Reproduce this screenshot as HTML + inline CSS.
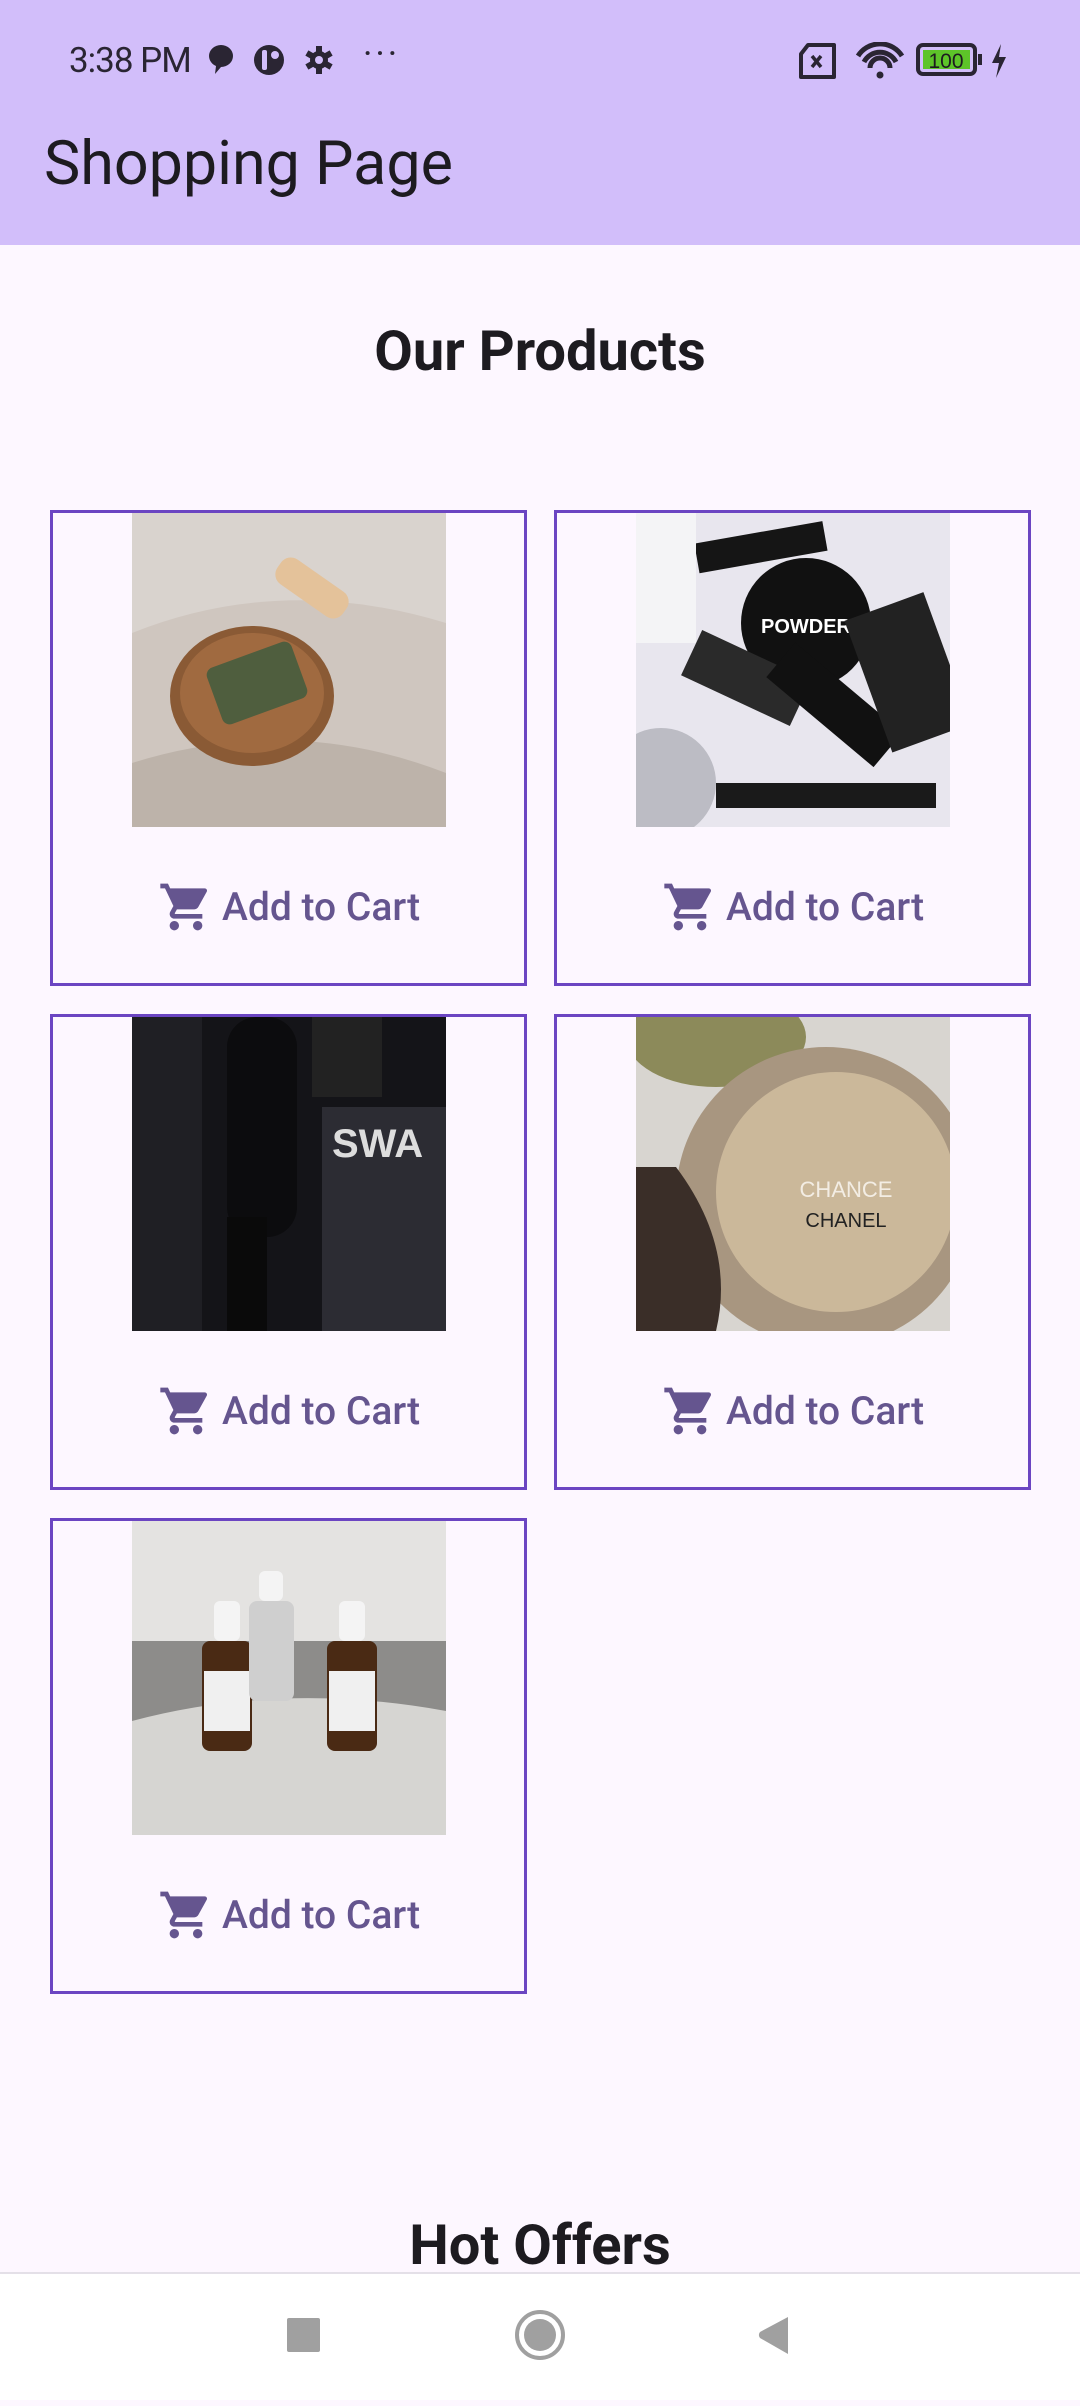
<!DOCTYPE html>
<html><head><meta charset="utf-8"><style>
*{margin:0;padding:0;box-sizing:border-box}
body{width:1080px;height:2400px;background:#FDF7FF;font-family:"Roboto","Liberation Sans",sans-serif;position:relative;overflow:hidden}
.top{position:absolute;left:0;top:0;width:1080px;height:245px;background:#D2BEFA}
.st{position:absolute;top:40px;font-size:35px;color:#2a2533;letter-spacing:-1px}
.title{position:absolute;left:44px;top:127px;font-size:61px;color:#1d1b20}
.h{position:absolute;left:0;width:1080px;text-align:center;font-weight:bold;color:#1d1b20;font-size:56px}
.card{position:absolute;width:477px;height:476px;border:3px solid #6B45C2;}
.img{position:absolute;left:79px;top:0;width:314px;height:314px;overflow:hidden}
.btn{position:absolute;left:105px;top:364px;height:60px;display:flex;align-items:center;color:#65558F;font-size:39px;font-weight:500;white-space:nowrap}
.btn svg{margin-right:8px}
.nav{position:absolute;left:0;top:2272px;width:1080px;height:128px;background:#fff;border-top:2px solid #e4e0e8}
</style></head><body>
<div class="top"></div>
<div class="st" style="left:69px">3:38 PM</div>
<svg style="position:absolute;left:205px;top:42px" width="130" height="36" viewBox="0 0 130 36">
<path d="M4 14a12 11 0 1 1 12 11l-6 7 1-8A11 11 0 0 1 4 14z" fill="#2a2533"/>
<circle cx="64" cy="18" r="15" fill="#2a2533"/><rect x="57" y="8" width="5" height="20" rx="2" fill="#D2BEFA"/><circle cx="70" cy="13" r="4" fill="#D2BEFA"/>
<g transform="translate(114 18)" fill="#2a2533"><circle r="9"/><rect x="-3" y="-14" width="6" height="28"/><rect x="-3" y="-14" width="6" height="28" transform="rotate(60)"/><rect x="-3" y="-14" width="6" height="28" transform="rotate(120)"/><circle r="4" fill="#D2BEFA"/></g>
</svg>
<div class="st" style="left:363px;top:33px;font-size:36px;letter-spacing:3px">···</div>
<svg style="position:absolute;left:798px;top:42px" width="220" height="40" viewBox="0 0 220 40">
<path d="M10 3h26v32H3V12z" fill="none" stroke="#2a2533" stroke-width="4" stroke-linejoin="round"/><path d="M14 14l9 11M23 14l-9 11" stroke="#2a2533" stroke-width="3.5"/>
<path d="M60 14a26 26 0 0 1 44 0M66 20a18 18 0 0 1 32 0M72 26a10 10 0 0 1 20 0" fill="none" stroke="#2a2533" stroke-width="5"/><circle cx="82" cy="33" r="3.5" fill="#2a2533"/>
<rect x="120" y="3" width="57" height="29" rx="5" fill="none" stroke="#2a2533" stroke-width="4"/><rect x="125" y="8" width="47" height="19" fill="#5DC429"/><rect x="180" y="12" width="4" height="11" fill="#2a2533"/>
<text x="148" y="26" font-size="21" text-anchor="middle" font-family="Liberation Sans" fill="#1d1b20">100</text>
<path d="M203 2l-9 19h7l-3 15 10-21h-7z" fill="#2a2533"/>
</svg>
<div class="title">Shopping Page</div>
<div class="h" style="top:318px">Our Products</div>

<!-- card 1 -->
<div class="card" style="left:50px;top:510px"><div class="img"><svg width="314" height="314"><rect width="314" height="314" fill="#d9d3ce"/><path d="M0 120 Q150 60 314 110 V314 H0z" fill="#cfc6bf"/><path d="M0 250 Q160 200 314 260V314H0z" fill="#bdb3aa"/><ellipse cx="120" cy="183" rx="82" ry="70" fill="#8a5a35"/><ellipse cx="120" cy="180" rx="72" ry="60" fill="#a06a40"/><rect x="80" y="140" width="90" height="60" rx="8" transform="rotate(-20 125 170)" fill="#4f5e3e"/><rect x="140" y="60" width="80" height="30" rx="12" transform="rotate(35 180 75)" fill="#e4c29a"/></svg></div>
<div class="btn"><svg width="56" height="56" viewBox="0 0 24 24"><path fill="#65558F" d="M7 18c-1.1 0-2 .9-2 2s.9 2 2 2 2-.9 2-2-.9-2-2-2zM1 2v2h2l3.6 7.59-1.35 2.45c-.16.28-.25.61-.25.96 0 1.1.9 2 2 2h12v-2H7.42c-.14 0-.25-.11-.25-.25l.03-.12.9-1.630h7.45c.75 0 1.41-.41 1.75-1.03l3.58-6.49A1 1 0 0 0 20 4H5.21l-.94-2H1zm16 16c-1.1 0-2 .9-2 2s.9 2 2 2 2-.9 2-2-.9-2-2-2z"/></svg>Add to Cart</div></div>

<!-- card 2 -->
<div class="card" style="left:554px;top:510px"><div class="img"><svg width="314" height="314"><rect width="314" height="314" fill="#e8e6ee"/><rect x="60" y="20" width="130" height="30" transform="rotate(-10 120 35)" fill="#151515"/><circle cx="170" cy="110" r="65" fill="#111"/><text x="170" y="120" fill="#fff" font-size="20" font-weight="bold" text-anchor="middle" font-family="Liberation Sans">POWDER</text><rect x="50" y="140" width="120" height="50" transform="rotate(25 110 165)" fill="#2a2a2a"/><rect x="130" y="170" width="140" height="45" transform="rotate(40 200 190)" fill="#111"/><rect x="80" y="270" width="220" height="25" fill="#1a1a1a"/><circle cx="25" cy="270" r="55" fill="#bcbcc4"/><rect x="0" y="0" width="60" height="130" fill="#f4f4f6"/><rect x="230" y="90" width="84" height="140" transform="rotate(-20 270 160)" fill="#222"/></svg></div>
<div class="btn"><svg width="56" height="56" viewBox="0 0 24 24"><path fill="#65558F" d="M7 18c-1.1 0-2 .9-2 2s.9 2 2 2 2-.9 2-2-.9-2-2-2zM1 2v2h2l3.6 7.59-1.35 2.45c-.16.28-.25.61-.25.96 0 1.1.9 2 2 2h12v-2H7.42c-.14 0-.25-.11-.25-.25l.03-.12.9-1.630h7.45c.75 0 1.41-.41 1.750-1.03l3.58-6.49A1 1 0 0 0 20 4H5.21l-.94-2H1zm16 16c-1.1 0-2 .9-2 2s.9 2 2 2 2-.9 2-2-.9-2-2-2z"/></svg>Add to Cart</div></div>

<!-- card 3 -->
<div class="card" style="left:50px;top:1014px"><div class="img"><svg width="314" height="314"><rect width="314" height="314" fill="#141418"/><rect x="0" y="0" width="70" height="314" fill="#1f1f24"/><rect x="95" y="0" width="70" height="220" rx="30" fill="#0c0c0e"/><rect x="180" y="0" width="70" height="80" fill="#222"/><rect x="190" y="90" width="124" height="224" fill="#2c2c33"/><text x="200" y="140" fill="#ddd" font-size="40" font-weight="bold" font-family="Liberation Sans">SWA</text><rect x="95" y="200" width="40" height="114" fill="#0a0a0a"/></svg></div>
<div class="btn"><svg width="56" height="56" viewBox="0 0 24 24"><path fill="#65558F" d="M7 18c-1.1 0-2 .9-2 2s.9 2 2 2 2-.9 2-2-.9-2-2-2zM1 2v2h2l3.6 7.59-1.35 2.45c-.16.28-.25.61-.25.96 0 1.1.9 2 2 2h12v-2H7.42c-.14 0-.25-.11-.25-.25l.03-.12.9-1.630h7.45c.75 0 1.41-.41 1.75-1.03l3.58-6.49A1 1 0 0 0 20 4H5.21l-.94-2H1zm16 16c-1.1 0-2 .9-2 2s.9 2 2 2 2-.9 2-2-.9-2-2-2z"/></svg>Add to Cart</div></div>

<!-- card 4 -->
<div class="card" style="left:554px;top:1014px"><div class="img"><svg width="314" height="314"><rect width="314" height="314" fill="#d8d5d0"/><ellipse cx="80" cy="20" rx="90" ry="50" fill="#8c8a5a"/><circle cx="190" cy="180" r="150" fill="#a89680"/><circle cx="200" cy="175" r="120" fill="#cbb89a"/><path d="M40 150 Q100 230 80 314 H0 V150z" fill="#3a2e28"/><text x="210" y="180" fill="#f3ede4" font-size="22" text-anchor="middle" font-family="Liberation Sans">CHANCE</text><text x="210" y="210" fill="#222" font-size="20" text-anchor="middle" font-family="Liberation Sans">CHANEL</text></svg></div>
<div class="btn"><svg width="56" height="56" viewBox="0 0 24 24"><path fill="#65558F" d="M7 18c-1.1 0-2 .9-2 2s.9 2 2 2 2-.9 2-2-.9-2-2-2zM1 2v2h2l3.6 7.59-1.35 2.45c-.16.28-.25.61-.25.96 0 1.1.9 2 2 2h12v-2H7.42c-.14 0-.25-.11-.25-.25l.03-.12.9-1.630h7.45c.75 0 1.41-.41 1.75-1.03l3.58-6.49A1 1 0 0 0 20 4H5.21l-.94-2H1zm16 16c-1.1 0-2 .9-2 2s.9 2 2 2 2-.9 2-2-.9-2-2-2z"/></svg>Add to Cart</div></div>

<!-- card 5 -->
<div class="card" style="left:50px;top:1518px"><div class="img"><svg width="314" height="314"><rect width="314" height="314" fill="#e4e3e1"/><path d="M0 120 H314 V314 H0z" fill="#8d8c8a"/><path d="M0 200 Q150 160 314 190 V314 H0z" fill="#d6d5d2"/><rect x="70" y="120" width="50" height="110" rx="8" fill="#4a2a14"/><rect x="72" y="150" width="46" height="60" fill="#f0f0f0"/><rect x="117" y="80" width="45" height="100" rx="8" fill="#cfcfcf"/><rect x="195" y="120" width="50" height="110" rx="8" fill="#4a2a14"/><rect x="197" y="150" width="46" height="60" fill="#f0f0f0"/><rect x="82" y="80" width="26" height="40" rx="6" fill="#f4f4f4"/><rect x="207" y="80" width="26" height="40" rx="6" fill="#f4f4f4"/><rect x="127" y="50" width="24" height="30" rx="6" fill="#f4f4f4"/></svg></div>
<div class="btn"><svg width="56" height="56" viewBox="0 0 24 24"><path fill="#65558F" d="M7 18c-1.1 0-2 .9-2 2s.9 2 2 2 2-.9 2-2-.9-2-2-2zM1 2v2h2l3.6 7.59-1.35 2.45c-.16.28-.25.61-.25.96 0 1.1.9 2 2 2h12v-2H7.42c-.14 0-.25-.11-.25-.25l.03-.12.9-1.630h7.45c.75 0 1.41-.41 1.75-1.03l3.58-6.49A1 1 0 0 0 20 4H5.21l-.94-2H1zm16 16c-1.1 0-2 .9-2 2s.9 2 2 2 2-.9 2-2-.9-2-2-2z"/></svg>Add to Cart</div></div>

<div class="h" style="top:2212px">Hot Offers</div>
<div class="nav">
<svg width="1080" height="128"><rect x="287" y="44" width="33" height="34" rx="2" fill="#a0a0a0"/><circle cx="540" cy="61" r="23" fill="none" stroke="#a0a0a0" stroke-width="4"/><circle cx="540" cy="61" r="16" fill="#a0a0a0"/><path d="M788 43v37L760 64a5 5 0 0 1 0-6z" fill="#a0a0a0"/></svg>
</div>
</body></html>
